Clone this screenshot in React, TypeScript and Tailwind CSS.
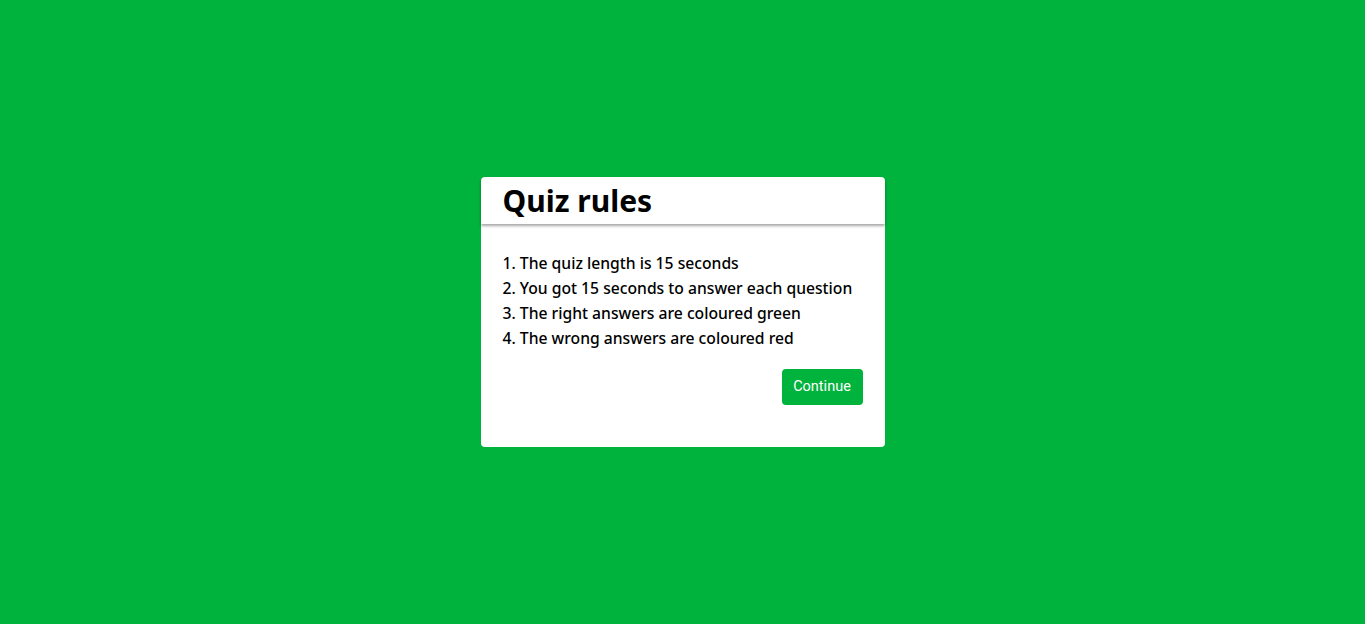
export default function App() {
  const rules = [
    "The quiz length is 15 seconds",
    "You got 15 seconds to answer each question",
    "The right answers are coloured green",
    "The wrong answers are coloured red",
  ];

  return (
    <div className="w-full h-screen bg-[#00b33c] flex items-center justify-center font-['Noto_Sans',sans-serif]">
      <div className="w-[404px] h-[270px] bg-white rounded-[4px] flex flex-col">
        <div className="h-[47px] px-[22px] flex items-center shadow-[0_2px_3px_rgba(0,0,0,0.35)] rounded-t-[4px]">
          <h1 className="text-[30px] font-bold text-black leading-none">Quiz rules</h1>
        </div>
        <div className="px-[22px] pt-[27px] flex flex-col">
          <ol className="text-[15.7px] leading-[25px] font-medium text-black">
            {rules.map((r, i) => (
              <li key={i}>
                {i + 1}. {r}
              </li>
            ))}
          </ol>
          <div className="flex justify-end mt-[18px]">
            <button className="w-[81px] h-[36px] rounded-[4px] bg-[#00b33c] text-white text-[14.5px] font-['Roboto',sans-serif]">
              Continue
            </button>
          </div>
        </div>
      </div>
    </div>
  );
}
